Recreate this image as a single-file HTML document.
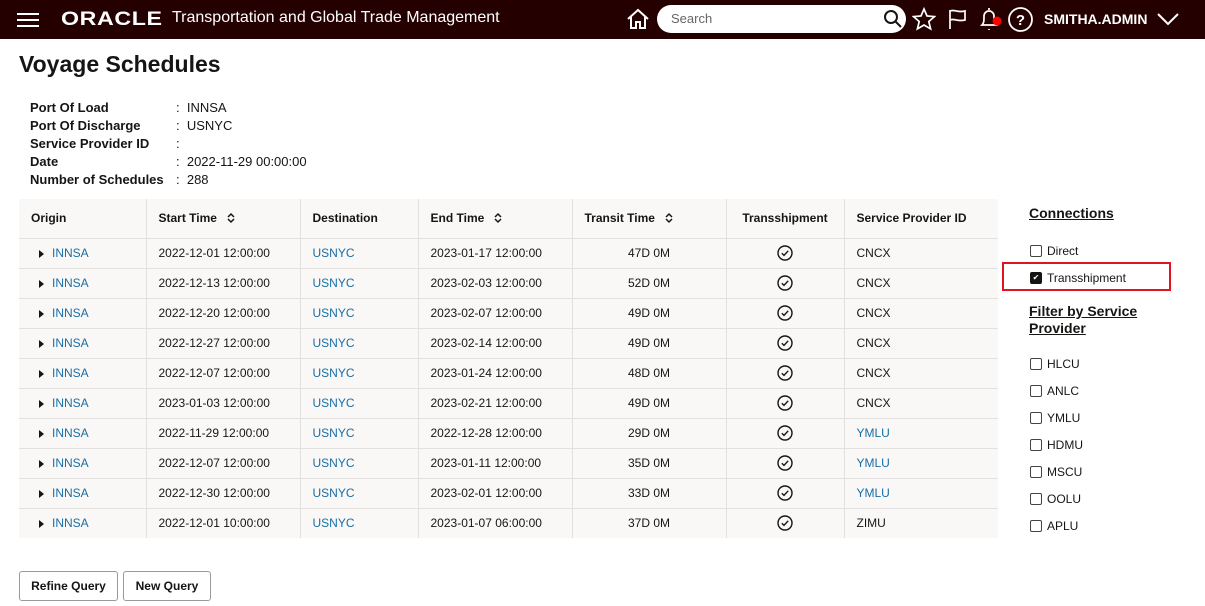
<!DOCTYPE html>
<html><head><meta charset="utf-8"><style>
*{margin:0;padding:0;box-sizing:border-box}
body{width:1205px;height:606px;background:#fff;font-family:"Liberation Sans",Arial,sans-serif;font-size:12px;color:#161513;position:relative;overflow:hidden}
.a{position:absolute;white-space:nowrap}
.hdr{position:absolute;left:0;top:0;width:1205px;height:39px;background:#250000;color:#fff}
.lnk{color:#1a6ea5}
.b{font-weight:bold}
table{position:absolute;left:19px;top:199px;border-collapse:collapse;background:#f9f8f7}
td,th{height:30px;border-right:1px solid #e3e1df;border-bottom:1px solid #e3e1df;text-align:left;padding:0 0 0 12px;font-size:12px;white-space:nowrap}
th{height:39px;font-weight:bold}
td:last-child,th:last-child{border-right:none}
tr:last-child td{border-bottom:none}
.c{text-align:center;padding:0}
.tri{display:inline-block;width:0;height:0;border-top:4px solid transparent;border-bottom:4px solid transparent;border-left:5px solid #161513;margin:0 8px 0 20px;vertical-align:-1px}
.sort{display:inline-block;margin-left:10px;vertical-align:-2px}
.ck{display:inline-block;vertical-align:middle}
.cb{position:absolute;width:12px;height:12px;border:1.6px solid #444;border-radius:2px;background:#fff}
.btn{position:absolute;top:571px;height:30px;border:1px solid #999;border-radius:3px;font-weight:bold;font-size:12px;text-align:center;line-height:28px;background:#fff}
</style></head><body>
<svg width="0" height="0" style="position:absolute"><defs>
<symbol id="ck" viewBox="0 0 16 16"><circle cx="8" cy="8" r="7" fill="none" stroke="#161513" stroke-width="1.4"/><path d="M4.8 8.2l2.2 2.2 4.2-4.6" fill="none" stroke="#161513" stroke-width="1.4"/></symbol>
<symbol id="so" viewBox="0 0 8 12"><path d="M1 5l3-3 3 3M1 7l3 3 3-3" fill="none" stroke="#161513" stroke-width="1.5"/></symbol>
</defs></svg>
<div class="hdr">
 <div class="a" style="left:17px;top:13px;width:22px;height:2px;background:#fff"></div>
 <div class="a" style="left:17px;top:19px;width:22px;height:2px;background:#fff"></div>
 <div class="a" style="left:17px;top:25px;width:22px;height:2px;background:#fff"></div>
 <div class="a" style="left:61px;top:9px;font-size:19px;font-weight:bold;letter-spacing:0.5px;transform:scaleX(1.22);transform-origin:left">ORACLE</div>
 <div class="a" style="left:172px;top:9px;font-size:16px">Transportation and Global Trade Management</div>
 <svg class="a" style="left:625px;top:6px" width="26" height="26" viewBox="0 0 26 26" fill="none" stroke="#fff" stroke-width="2"><path d="M3 13L13 4l10 9M6 11v11h5v-6h4v6h5V11"/></svg>
 <div class="a" style="left:657px;top:5px;width:249px;height:28px;background:#fff;border-radius:14px"></div>
 <div class="a" style="left:671px;top:11px;color:#666;font-size:13px">Search</div>
 <svg class="a" style="left:883px;top:9px" width="20" height="20" viewBox="0 0 20 20" fill="none" stroke="#161513" stroke-width="2"><circle cx="8" cy="8" r="6"/><path d="M12.5 12.5L18 18"/></svg>
 <svg class="a" style="left:912px;top:7px" width="24" height="24" viewBox="0 0 24 24" fill="none" stroke="#fff" stroke-width="1.7"><path d="M12 2l3 7 7.5.6-5.7 4.9 1.8 7.4L12 18l-6.6 3.9 1.8-7.4L1.5 9.6 9 9z"/></svg>
 <svg class="a" style="left:946px;top:7px" width="24" height="24" viewBox="0 0 24 24" fill="none" stroke="#fff" stroke-width="1.7"><path d="M4 22V3M4 4c5-2 7 2 15 0v9c-8 2-10-2-15 0"/></svg>
 <svg class="a" style="left:977px;top:5px" width="26" height="28" viewBox="0 0 26 28" fill="none" stroke="#fff" stroke-width="1.7"><path d="M12 3v2M5 20c2-2 2-4 2-9a5 5 0 0110 0c0 5 0 7 2 9zM12 24v1"/><circle cx="20" cy="16" r="4.5" fill="#f00" stroke="none"/></svg>
 <svg class="a" style="left:1007px;top:6px" width="27" height="27" viewBox="0 0 27 27" fill="none" stroke="#fff" stroke-width="1.8"><circle cx="13.5" cy="13.5" r="11.5"/><text x="13.5" y="19" fill="#fff" stroke="none" font-size="15" font-weight="bold" text-anchor="middle" font-family="Liberation Sans">?</text></svg>
 <div class="a b" style="left:1044px;top:11px;font-size:14px">SMITHA.ADMIN</div>
 <svg class="a" style="left:1156px;top:11px" width="24" height="16" viewBox="0 0 24 16" fill="none" stroke="#fff" stroke-width="2"><path d="M2 3l10 10L22 3"/></svg>
</div>

<div class="a b" style="left:19px;top:51px;font-size:23px">Voyage Schedules</div>
<div class="a b" style="left:30px;top:99px;font-size:13px;line-height:18px">Port Of Load<br>Port Of Discharge<br>Service Provider ID<br>Date<br>Number of Schedules</div>
<div class="a" style="left:176px;top:99px;font-size:13px;line-height:18px">:&nbsp;&nbsp;INNSA<br>:&nbsp;&nbsp;USNYC<br>:<br>:&nbsp;&nbsp;2022-11-29 00:00:00<br>:&nbsp;&nbsp;288</div>

<table>
<tr><th style="width:127px">Origin</th><th style="width:154px">Start Time<svg class="sort" width="8" height="12"><use href="#so"/></svg></th><th style="width:118px">Destination</th><th style="width:154px">End Time<svg class="sort" width="8" height="12"><use href="#so"/></svg></th><th style="width:154px">Transit Time<svg class="sort" width="8" height="12"><use href="#so"/></svg></th><th class="c" style="width:118px">Transshipment</th><th style="width:154px">Service Provider ID</th></tr>
<tr><td style="padding:0"><span class="tri"></span><span class="lnk">INNSA</span></td><td>2022-12-01 12:00:00</td><td class="lnk">USNYC</td><td>2023-01-17 12:00:00</td><td class="c">47D 0M</td><td class="c"><svg class="ck" width="16" height="16"><use href="#ck"/></svg></td><td>CNCX</td></tr>
<tr><td style="padding:0"><span class="tri"></span><span class="lnk">INNSA</span></td><td>2022-12-13 12:00:00</td><td class="lnk">USNYC</td><td>2023-02-03 12:00:00</td><td class="c">52D 0M</td><td class="c"><svg class="ck" width="16" height="16"><use href="#ck"/></svg></td><td>CNCX</td></tr>
<tr><td style="padding:0"><span class="tri"></span><span class="lnk">INNSA</span></td><td>2022-12-20 12:00:00</td><td class="lnk">USNYC</td><td>2023-02-07 12:00:00</td><td class="c">49D 0M</td><td class="c"><svg class="ck" width="16" height="16"><use href="#ck"/></svg></td><td>CNCX</td></tr>
<tr><td style="padding:0"><span class="tri"></span><span class="lnk">INNSA</span></td><td>2022-12-27 12:00:00</td><td class="lnk">USNYC</td><td>2023-02-14 12:00:00</td><td class="c">49D 0M</td><td class="c"><svg class="ck" width="16" height="16"><use href="#ck"/></svg></td><td>CNCX</td></tr>
<tr><td style="padding:0"><span class="tri"></span><span class="lnk">INNSA</span></td><td>2022-12-07 12:00:00</td><td class="lnk">USNYC</td><td>2023-01-24 12:00:00</td><td class="c">48D 0M</td><td class="c"><svg class="ck" width="16" height="16"><use href="#ck"/></svg></td><td>CNCX</td></tr>
<tr><td style="padding:0"><span class="tri"></span><span class="lnk">INNSA</span></td><td>2023-01-03 12:00:00</td><td class="lnk">USNYC</td><td>2023-02-21 12:00:00</td><td class="c">49D 0M</td><td class="c"><svg class="ck" width="16" height="16"><use href="#ck"/></svg></td><td>CNCX</td></tr>
<tr><td style="padding:0"><span class="tri"></span><span class="lnk">INNSA</span></td><td>2022-11-29 12:00:00</td><td class="lnk">USNYC</td><td>2022-12-28 12:00:00</td><td class="c">29D 0M</td><td class="c"><svg class="ck" width="16" height="16"><use href="#ck"/></svg></td><td class="lnk">YMLU</td></tr>
<tr><td style="padding:0"><span class="tri"></span><span class="lnk">INNSA</span></td><td>2022-12-07 12:00:00</td><td class="lnk">USNYC</td><td>2023-01-11 12:00:00</td><td class="c">35D 0M</td><td class="c"><svg class="ck" width="16" height="16"><use href="#ck"/></svg></td><td class="lnk">YMLU</td></tr>
<tr><td style="padding:0"><span class="tri"></span><span class="lnk">INNSA</span></td><td>2022-12-30 12:00:00</td><td class="lnk">USNYC</td><td>2023-02-01 12:00:00</td><td class="c">33D 0M</td><td class="c"><svg class="ck" width="16" height="16"><use href="#ck"/></svg></td><td class="lnk">YMLU</td></tr>
<tr><td style="padding:0"><span class="tri"></span><span class="lnk">INNSA</span></td><td>2022-12-01 10:00:00</td><td class="lnk">USNYC</td><td>2023-01-07 06:00:00</td><td class="c">37D 0M</td><td class="c"><svg class="ck" width="16" height="16"><use href="#ck"/></svg></td><td>ZIMU</td></tr>
</table>

<div class="a b" style="left:1029px;top:205px;font-size:14px;text-decoration:underline">Connections</div>
<div class="cb" style="left:1030px;top:245px"></div><div class="a" style="left:1047px;top:244px">Direct</div>
<div class="a" style="left:1002px;top:262px;width:169px;height:29px;border:2px solid #e0141e"></div>
<div class="cb" style="left:1030px;top:272px;background:#161513;border-color:#161513;color:#fff;font-size:8px;line-height:9px;text-align:center">✔</div><div class="a" style="left:1047px;top:271px">Transshipment</div>
<div class="a b" style="left:1029px;top:303px;font-size:14px;text-decoration:underline;line-height:17px">Filter by Service<br>Provider</div>
<div class="cb" style="left:1030px;top:358px"></div><div class="a" style="left:1047px;top:357px">HLCU</div>
<div class="cb" style="left:1030px;top:385px"></div><div class="a" style="left:1047px;top:384px">ANLC</div>
<div class="cb" style="left:1030px;top:412px"></div><div class="a" style="left:1047px;top:411px">YMLU</div>
<div class="cb" style="left:1030px;top:439px"></div><div class="a" style="left:1047px;top:438px">HDMU</div>
<div class="cb" style="left:1030px;top:466px"></div><div class="a" style="left:1047px;top:465px">MSCU</div>
<div class="cb" style="left:1030px;top:493px"></div><div class="a" style="left:1047px;top:492px">OOLU</div>
<div class="cb" style="left:1030px;top:520px"></div><div class="a" style="left:1047px;top:519px">APLU</div>

<div class="btn" style="left:19px;width:99px">Refine Query</div>
<div class="btn" style="left:123px;width:88px">New Query</div>
</body></html>
